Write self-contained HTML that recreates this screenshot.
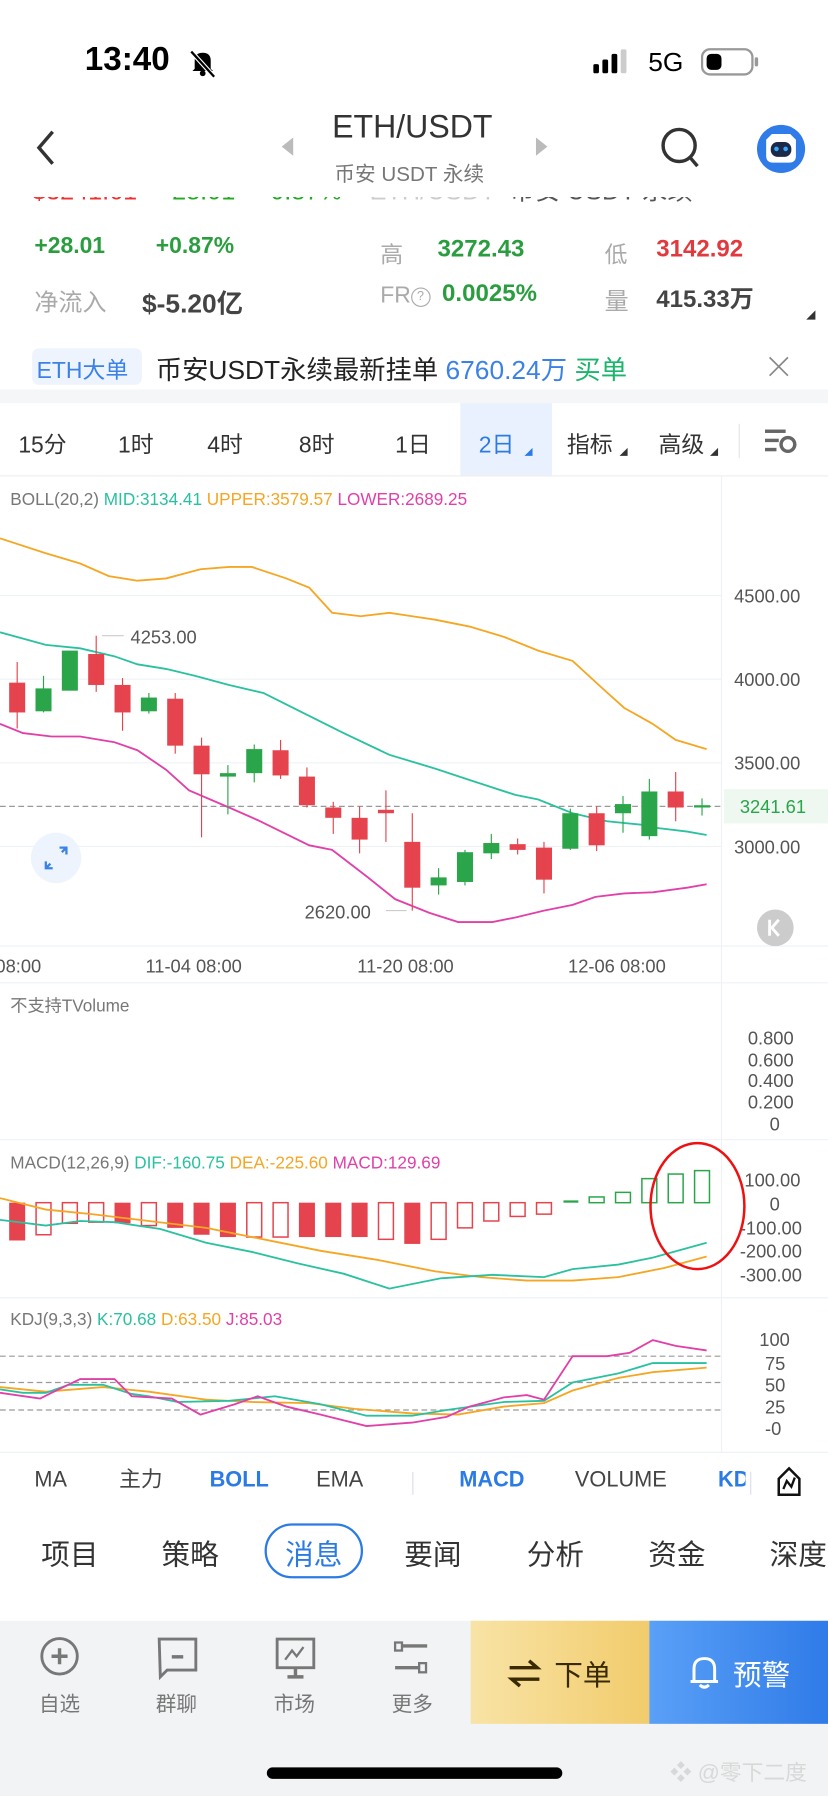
<!DOCTYPE html>
<html><head><meta charset="utf-8"><style>
html,body{margin:0;padding:0;background:#fff;}
body{width:828px;height:1796px;overflow:hidden;position:relative;font-family:"Liberation Sans","Noto Sans CJK SC",sans-serif;}
#w{position:absolute;left:0;top:0;width:723px;height:1568px;transform:scale(1.14523,1.14541);transform-origin:0 0;}
.a{position:absolute;white-space:nowrap;}
</style></head><body><div id="w">
<!-- status bar -->
<div class="a" style="left:74px;top:36px;font-size:29px;font-weight:bold;color:#000;">13:40</div>
<svg class="a" style="left:162px;top:40px" width="30" height="30" viewBox="0 0 30 30"><path d="M8 20 L8 13 Q8 6 15 6 Q22 6 22 13 L22 20 L24 22 L6 22 Z" fill="#000"/><circle cx="15" cy="24" r="2.5" fill="#000"/><line x1="5" y1="5" x2="25" y2="27" stroke="#fff" stroke-width="4"/><line x1="5" y1="5" x2="25" y2="27" stroke="#000" stroke-width="2"/></svg>
<svg class="a" style="left:518px;top:43px" width="36" height="22"><rect x="0" y="13" width="5" height="8" rx="1.5"/><rect x="8" y="9" width="5" height="12" rx="1.5"/><rect x="16" y="4" width="5" height="17" rx="1.5"/><rect x="24" y="0" width="5" height="21" rx="1.5" fill="#ccc"/></svg>
<div class="a" style="left:566px;top:41px;font-size:23px;color:#000;">5G</div>
<svg class="a" style="left:612px;top:41px" width="52" height="26"><rect x="1" y="2" width="44" height="22" rx="7" fill="none" stroke="#999" stroke-width="2"/><rect x="5" y="6" width="13" height="14" rx="4" fill="#000"/><rect x="47" y="9" width="3" height="8" rx="1.5" fill="#999"/></svg>
<!-- nav -->
<svg class="a" style="left:28px;top:112px" width="24" height="34"><path d="M18 3 L6 17 L18 31" fill="none" stroke="#333" stroke-width="3"/></svg>
<svg class="a" style="left:244px;top:118px" width="14" height="20"><path d="M12 2 L2 10 L12 18Z" fill="#bbb"/></svg>
<svg class="a" style="left:466px;top:118px" width="14" height="20"><path d="M2 2 L12 10 L2 18Z" fill="#bbb"/></svg>
<div class="a" style="left:290px;top:95px;font-size:28px;color:#333;">ETH/USDT</div>
<div class="a" style="left:292px;top:138px;font-size:18px;color:#777;">币安 USDT 永续</div>
<svg class="a" style="left:574px;top:108px" width="40" height="44"><circle cx="19" cy="19" r="14" fill="none" stroke="#333" stroke-width="3"/><line x1="29" y1="30" x2="35" y2="37" stroke="#333" stroke-width="3"/></svg>
<svg class="a" style="left:660px;top:108px" width="44" height="44"><circle cx="22" cy="22" r="21" fill="#2f7be8"/><path d="M9 14 L14 9 L30 9 L35 14 L35 28 Q35 34 29 34 L15 34 Q9 34 9 28Z" fill="#fff"/><rect x="13" y="16" width="18" height="13" rx="6" fill="#1b2a4a"/><circle cx="18" cy="22" r="2" fill="#3af"/><circle cx="26" cy="22" r="2" fill="#3af"/></svg>
<!-- price info clipped row -->
<div class="a" style="left:0;top:172px;width:723px;height:10px;overflow:hidden;">
<div class="a" style="left:28px;top:-18px;font-size:22px;line-height:26px;color:#e33;">$3241.61&nbsp;&nbsp;&nbsp;&nbsp;&nbsp;<span style="color:#2a2">28.01</span>&nbsp;&nbsp;&nbsp;&nbsp;&nbsp;<span style="color:#2a2">0.87%</span>&nbsp;&nbsp;&nbsp;&nbsp;<span style="color:#ccc">ETH/USDT</span>&nbsp;&nbsp;<span style="color:#555">币安 USDT 永续</span></div></div>
<div class="a" style="left:30px;top:204px;font-size:20px;font-weight:bold;color:#2a9d3f;">+28.01</div>
<div class="a" style="left:136px;top:204px;font-size:20px;font-weight:bold;color:#2a9d3f;">+0.87%</div>
<div class="a" style="left:332px;top:206px;font-size:20px;color:#aaa;">高</div>
<div class="a" style="left:382px;top:206px;font-size:21px;font-weight:bold;color:#2a9d3f;">3272.43</div>
<div class="a" style="left:528px;top:206px;font-size:20px;color:#aaa;">低</div>
<div class="a" style="left:573px;top:206px;font-size:21px;font-weight:bold;color:#e03a3e;">3142.92</div>
<div class="a" style="left:30px;top:248px;font-size:21px;color:#aaa;">净流入</div>
<div class="a" style="left:124px;top:246px;font-size:23px;font-weight:bold;color:#444;">$-5.20亿</div>
<div class="a" style="left:332px;top:247px;font-size:20px;color:#aaa;">FR<span style="display:inline-block;width:15px;height:15px;border:1.5px solid #aaa;border-radius:50%;font-size:11px;text-align:center;line-height:15px;vertical-align:2px">?</span></div>
<div class="a" style="left:386px;top:245px;font-size:21px;font-weight:bold;color:#2a9d3f;">0.0025%</div>
<div class="a" style="left:528px;top:247px;font-size:21px;color:#aaa;">量</div>
<div class="a" style="left:573px;top:245px;font-size:21px;font-weight:bold;color:#444;">415.33万</div>
<svg class="a" style="left:703px;top:270px" width="10" height="10"><path d="M9 1 L9 9 L1 9Z" fill="#333"/></svg>
<!-- banner -->
<div class="a" style="left:28px;top:304px;width:96px;height:32px;background:#eef4fe;border-radius:6px;"></div>
<div class="a" style="left:32px;top:307px;font-size:20px;color:#3b82e6;">ETH大单</div>
<div class="a" style="left:136px;top:304px;font-size:23px;color:#222;">币安USDT永续最新挂单 <span style="color:#3b82e6">6760.24万</span> <span style="color:#1bb56b">买单</span></div>
<svg class="a" style="left:670px;top:310px" width="20" height="20"><path d="M2 2L18 18M18 2L2 18" stroke="#888" stroke-width="1.5"/></svg>
<div class="a" style="left:0;top:340px;width:723px;height:12px;background:#f5f6f8;"></div>
<!-- timeframe tabs -->
<div class="a" style="left:402px;top:352px;width:80px;height:63px;background:#e8f1fd;"></div>
<div class="a" style="left:16px;top:372px;font-size:20px;color:#333;">15分</div>
<div class="a" style="left:103px;top:372px;font-size:20px;color:#333;">1时</div>
<div class="a" style="left:181px;top:372px;font-size:20px;color:#333;">4时</div>
<div class="a" style="left:261px;top:372px;font-size:20px;color:#333;">8时</div>
<div class="a" style="left:345px;top:372px;font-size:20px;color:#333;">1日</div>
<div class="a" style="left:418px;top:372px;font-size:20px;color:#2b7be5;">2日</div>
<div class="a" style="left:495px;top:372px;font-size:20px;color:#333;">指标</div>
<div class="a" style="left:575px;top:372px;font-size:20px;color:#333;">高级</div>
<svg class="a" style="left:455px;top:390px" width="180" height="10"><path d="M10 1L10 8L3 8Z" fill="#2b7be5"/><path d="M93 1L93 8L86 8Z" fill="#333"/><path d="M172 1L172 8L165 8Z" fill="#333"/></svg>
<div class="a" style="left:645px;top:370px;width:1px;height:30px;background:#e5e5e5;"></div>
<svg class="a" style="left:666px;top:372px" width="32" height="28"><rect x="2" y="3" width="18" height="3" fill="#666"/><rect x="2" y="11" width="12" height="3" fill="#666"/><rect x="2" y="19" width="10" height="3" fill="#666"/><circle cx="22" cy="16" r="6" fill="none" stroke="#666" stroke-width="3"/></svg>
<div class="a" style="left:0;top:415px;width:723px;height:1px;background:#eee;"></div>
<!-- chart -->
<svg class="a" style="left:0;top:415px" width="723" height="855" viewBox="0 415 723 855">
<g stroke="#eef2f7" stroke-width="1"><line x1="0" y1="520" x2="630" y2="520"/><line x1="0" y1="593" x2="630" y2="593"/><line x1="0" y1="666" x2="630" y2="666"/><line x1="0" y1="739" x2="630" y2="739"/><line x1="630" y1="415" x2="630" y2="1268"/><line x1="0" y1="826" x2="723" y2="826"/><line x1="0" y1="858" x2="723" y2="858"/><line x1="0" y1="995" x2="723" y2="995"/><line x1="0" y1="1133" x2="723" y2="1133"/><line x1="0" y1="1268" x2="723" y2="1268"/></g>
<line x1="0" y1="704" x2="630" y2="704" stroke="#999" stroke-dasharray="5,3"/>
<polyline fill="none" stroke="#f5a623" stroke-width="1.6" points="0,470 40,483 70,492 95,503 120,507 145,505 175,497 200,495 220,495 250,505 270,513 290,535 315,538 340,535 360,538 380,541 410,547 440,556 470,568 500,577 525,600 545,618 570,632 590,646 617,654"/>
<polyline fill="none" stroke="#2ac1a0" stroke-width="1.6" points="0,552 40,563 70,566 100,573 120,580 145,584 170,590 200,598 230,605 260,620 300,640 340,659 380,671 410,681 450,694 470,698 500,710 530,717 560,720 575,723 600,726 617,729"/>
<polyline fill="none" stroke="#e040a8" stroke-width="1.6" points="0,632 20,640 45,643 70,643 100,648 120,655 145,672 165,690 200,705 225,716 270,738 290,742 320,765 345,785 375,797 400,805 430,805 450,801 475,795 500,790 520,783 545,780 570,779 600,775 617,772"/>
<rect x="8" y="596" width="14" height="26" fill="#e5434d"/><line x1="15" y1="578" x2="15" y2="636" stroke="#e5434d"/>
<rect x="31" y="601" width="14" height="20" fill="#2aa54a"/><line x1="38" y1="590" x2="38" y2="622" stroke="#2aa54a"/>
<rect x="54" y="568" width="14" height="35" fill="#2aa54a"/>
<rect x="77" y="571" width="14" height="27" fill="#e5434d"/><line x1="84" y1="555" x2="84" y2="604" stroke="#e5434d"/>
<rect x="100" y="598" width="14" height="24" fill="#e5434d"/><line x1="107" y1="592" x2="107" y2="638" stroke="#e5434d"/>
<rect x="123" y="609" width="14" height="12" fill="#2aa54a"/><line x1="130" y1="605" x2="130" y2="623" stroke="#2aa54a"/>
<rect x="146" y="610" width="14" height="41" fill="#e5434d"/><line x1="153" y1="605" x2="153" y2="658" stroke="#e5434d"/>
<rect x="169" y="651" width="14" height="25" fill="#e5434d"/><line x1="176" y1="644" x2="176" y2="731" stroke="#e5434d"/>
<rect x="192" y="675" width="14" height="3" fill="#2aa54a"/><line x1="199" y1="668" x2="199" y2="711" stroke="#2aa54a"/>
<rect x="215" y="654" width="14" height="21" fill="#2aa54a"/><line x1="222" y1="650" x2="222" y2="683" stroke="#2aa54a"/>
<rect x="238" y="655" width="14" height="22" fill="#e5434d"/><line x1="245" y1="646" x2="245" y2="680" stroke="#e5434d"/>
<rect x="261" y="678" width="14" height="25" fill="#e5434d"/><line x1="268" y1="670" x2="268" y2="705" stroke="#e5434d"/>
<rect x="284" y="705" width="14" height="9" fill="#e5434d"/><line x1="291" y1="700" x2="291" y2="728" stroke="#e5434d"/>
<rect x="307" y="714" width="14" height="19" fill="#e5434d"/><line x1="314" y1="704" x2="314" y2="745" stroke="#e5434d"/>
<rect x="330" y="707" width="14" height="3" fill="#e5434d"/><line x1="337" y1="690" x2="337" y2="735" stroke="#e5434d"/>
<rect x="353" y="735" width="14" height="40" fill="#e5434d"/><line x1="360" y1="710" x2="360" y2="795" stroke="#e5434d"/>
<rect x="376" y="766" width="14" height="7" fill="#2aa54a"/><line x1="383" y1="758" x2="383" y2="781" stroke="#2aa54a"/>
<rect x="399" y="744" width="14" height="26" fill="#2aa54a"/><line x1="406" y1="742" x2="406" y2="773" stroke="#2aa54a"/>
<rect x="422" y="736" width="14" height="9" fill="#2aa54a"/><line x1="429" y1="728" x2="429" y2="750" stroke="#2aa54a"/>
<rect x="445" y="737" width="14" height="5" fill="#e5434d"/><line x1="452" y1="732" x2="452" y2="746" stroke="#e5434d"/>
<rect x="468" y="740" width="14" height="28" fill="#e5434d"/><line x1="475" y1="735" x2="475" y2="780" stroke="#e5434d"/>
<rect x="491" y="710" width="14" height="31" fill="#2aa54a"/><line x1="498" y1="706" x2="498" y2="742" stroke="#2aa54a"/>
<rect x="514" y="710" width="14" height="28" fill="#e5434d"/><line x1="521" y1="704" x2="521" y2="743" stroke="#e5434d"/>
<rect x="537" y="702" width="14" height="8" fill="#2aa54a"/><line x1="544" y1="695" x2="544" y2="727" stroke="#2aa54a"/>
<rect x="560" y="691" width="14" height="39" fill="#2aa54a"/><line x1="567" y1="680" x2="567" y2="733" stroke="#2aa54a"/>
<rect x="583" y="691" width="14" height="14" fill="#e5434d"/><line x1="590" y1="674" x2="590" y2="717" stroke="#e5434d"/>
<rect x="606" y="703" width="14" height="2" fill="#2aa54a"/><line x1="613" y1="697" x2="613" y2="712" stroke="#2aa54a"/>
<line x1="89" y1="555" x2="108" y2="555" stroke="#ccc"/><line x1="337" y1="795" x2="355" y2="795" stroke="#ccc"/>
<text x="114" y="562" font-size="16" fill="#555" font-family="Liberation Sans">4253.00</text>
<text x="266" y="802" font-size="16" fill="#555" font-family="Liberation Sans">2620.00</text>
<rect x="632" y="689" width="91" height="30" fill="#eef8f1"/>
<text x="646" y="710" font-size="16" fill="#2aa54a" font-family="Liberation Sans">3241.61</text>
<g font-size="16" fill="#555" font-family="Liberation Sans"><text x="641" y="526">4500.00</text><text x="641" y="599">4000.00</text><text x="641" y="672">3500.00</text><text x="641" y="745">3000.00</text>
<text x="-4" y="849">08:00</text><text x="127" y="849">11-04 08:00</text><text x="312" y="849">11-20 08:00</text><text x="496" y="849">12-06 08:00</text>
<text x="653" y="912">0.800</text><text x="653" y="931">0.600</text><text x="653" y="949">0.400</text><text x="653" y="968">0.200</text><text x="672" y="987">0</text>
<text x="650" y="1036">100.00</text><text x="672" y="1057">0</text><text x="646" y="1078">-100.00</text><text x="646" y="1098">-200.00</text><text x="646" y="1119">-300.00</text>
<text x="663" y="1175">100</text><text x="668" y="1196">75</text><text x="668" y="1215">50</text><text x="668" y="1234">25</text><text x="668" y="1253">-0</text></g>
<circle cx="49" cy="749" r="22" fill="#eef4fe"/><path d="M44 754 L40 758 M40 752 L40 758 L46 758 M54 744 L58 740 M52 740 L58 740 L58 746" stroke="#3b82e6" stroke-width="2" fill="none"/>
<circle cx="677" cy="810" r="16" fill="#ccc"/><path d="M672 803 L672 817 M680 803 L674 810 L680 817" stroke="#fff" stroke-width="2.5" fill="none"/>
<text x="9" y="441" font-size="15" font-family="Liberation Sans" fill="#777">BOLL(20,2) <tspan fill="#2ac1a0">MID:3134.41</tspan> <tspan fill="#f5a623">UPPER:3579.57</tspan> <tspan fill="#e040a8">LOWER:2689.25</tspan></text>
<text x="9" y="883" font-size="15" font-family="Liberation Sans,Noto Sans CJK SC" fill="#777">不支持TVolume</text>
<text x="9" y="1020" font-size="15" font-family="Liberation Sans" fill="#777">MACD(12,26,9) <tspan fill="#2ac1a0">DIF:-160.75</tspan> <tspan fill="#f5a623">DEA:-225.60</tspan> <tspan fill="#e040a8">MACD:129.69</tspan></text>
<text x="9" y="1157" font-size="15" font-family="Liberation Sans" fill="#777">KDJ(9,3,3) <tspan fill="#2ac1a0">K:70.68</tspan> <tspan fill="#f5a623">D:63.50</tspan> <tspan fill="#e040a8">J:85.03</tspan></text>
<g fill="#e5434d"><rect x="8" y="1050" width="14" height="33"/><rect x="100" y="1050" width="14" height="18"/><rect x="146" y="1050" width="14" height="22"/><rect x="169" y="1050" width="14" height="28"/><rect x="192" y="1050" width="14" height="30"/><rect x="261" y="1050" width="14" height="30"/><rect x="284" y="1050" width="14" height="30"/><rect x="307" y="1050" width="14" height="30"/><rect x="353" y="1050" width="14" height="36"/></g>
<g fill="none" stroke="#e5434d" stroke-width="1.3"><rect x="31.5" y="1050" width="13" height="28"/><rect x="54.5" y="1050" width="13" height="18"/><rect x="77.5" y="1050" width="13" height="17"/><rect x="123.5" y="1050" width="13" height="20"/><rect x="215.5" y="1050" width="13" height="30"/><rect x="238.5" y="1050" width="13" height="30"/><rect x="330.5" y="1050" width="13" height="32"/><rect x="376.5" y="1050" width="13" height="32"/><rect x="399.5" y="1050" width="13" height="22"/><rect x="422.5" y="1050" width="13" height="16"/><rect x="445.5" y="1050" width="13" height="12"/><rect x="468.5" y="1050" width="13" height="10"/></g>
<g fill="none" stroke="#2aa54a" stroke-width="1.3"><line x1="492" y1="1049" x2="505" y2="1049" stroke-width="2"/><rect x="514.5" y="1045" width="13" height="5"/><rect x="537.5" y="1041" width="13" height="9"/><rect x="560.5" y="1029" width="13" height="21"/><rect x="583.5" y="1025" width="13" height="25"/><rect x="606.5" y="1022" width="13" height="28"/></g>
<polyline fill="none" stroke="#f5a623" stroke-width="1.6" points="0,1046 40,1056 80,1060 130,1066 180,1072 230,1082 280,1092 330,1100 380,1110 420,1115 460,1118 500,1118 540,1115 580,1107 617,1097"/>
<polyline fill="none" stroke="#2ac1a0" stroke-width="1.6" points="0,1065 40,1070 70,1066 100,1067 140,1073 180,1085 220,1093 260,1103 300,1112 340,1125 385,1116 430,1113 475,1115 500,1108 540,1104 570,1098 617,1085"/>
<ellipse cx="609" cy="1053" rx="41" ry="55" fill="none" stroke="#e11" stroke-width="2.2"/>
<g stroke="#999" stroke-dasharray="5,3"><line x1="0" y1="1184" x2="630" y2="1184"/><line x1="0" y1="1207" x2="630" y2="1207"/><line x1="0" y1="1231" x2="630" y2="1231"/></g>
<polyline fill="none" stroke="#f5a623" stroke-width="1.6" points="0,1211 40,1215 90,1211 130,1215 180,1222 220,1224 270,1225 310,1230 360,1234 400,1235 440,1228 475,1225 500,1214 540,1203 570,1198 617,1194"/>
<polyline fill="none" stroke="#2ac1a0" stroke-width="1.6" points="0,1213 20,1216 40,1216 60,1209 90,1209 115,1217 130,1219 155,1224 200,1223 240,1219 280,1226 320,1236 360,1236 390,1231 440,1224 475,1223 500,1207 540,1199 570,1190 617,1190"/>
<polyline fill="none" stroke="#e040a8" stroke-width="1.6" points="0,1216 35,1221 45,1216 70,1204 100,1204 115,1219 150,1221 175,1235 205,1226 225,1219 250,1228 280,1235 320,1245 360,1242 390,1237 410,1228 440,1220 460,1218 475,1222 500,1184 530,1184 550,1181 570,1170 590,1175 617,1179"/>
</svg>
<!-- indicator tabs -->
<div class="a" style="left:30px;top:1282px;font-size:19px;color:#444;">MA</div>
<div class="a" style="left:104px;top:1281px;font-size:19px;color:#444;line-height:24px;">主力</div>
<div class="a" style="left:183px;top:1282px;font-size:19px;font-weight:bold;color:#2b7be5;">BOLL</div>
<div class="a" style="left:276px;top:1282px;font-size:19px;color:#444;">EMA</div>
<div class="a" style="left:360px;top:1285px;width:1px;height:20px;background:#dde;"></div>
<div class="a" style="left:401px;top:1282px;font-size:19px;font-weight:bold;color:#2b7be5;">MACD</div>
<div class="a" style="left:502px;top:1282px;font-size:19px;color:#444;">VOLUME</div>
<div class="a" style="left:627px;top:1282px;width:24px;overflow:hidden;font-size:19px;font-weight:bold;color:#2b7be5;">KDJ</div>
<div class="a" style="left:655px;top:1285px;width:1px;height:20px;background:#dde;"></div>
<svg class="a" style="left:676px;top:1279px" width="26" height="30"><path d="M4 26 L4 12 L13 3 L22 12 L22 26Z" fill="none" stroke="#111" stroke-width="2.2"/><path d="M8 21 L11 14 L15 19 L18 11" fill="none" stroke="#111" stroke-width="2"/></svg>
<!-- news tabs -->
<div class="a" style="left:231px;top:1330px;width:86px;height:48px;border:2px solid #2b7be5;border-radius:25px;box-sizing:border-box;"></div>
<div class="a" style="left:36px;top:1338px;font-size:25px;color:#333;">项目</div>
<div class="a" style="left:141px;top:1338px;font-size:25px;color:#333;">策略</div>
<div class="a" style="left:249px;top:1338px;font-size:25px;color:#2b7be5;">消息</div>
<div class="a" style="left:353px;top:1338px;font-size:25px;color:#333;">要闻</div>
<div class="a" style="left:460px;top:1338px;font-size:25px;color:#333;">分析</div>
<div class="a" style="left:566px;top:1338px;font-size:25px;color:#333;">资金</div>
<div class="a" style="left:672px;top:1338px;font-size:25px;color:#333;">深度</div>
<!-- bottom bar -->
<div class="a" style="left:0;top:1415px;width:723px;height:153px;background:#f2f3f5;"></div>
<svg class="a" style="left:34px;top:1428px" width="36" height="36"><circle cx="18" cy="18" r="15.5" fill="none" stroke="#777" stroke-width="2.5"/><path d="M18 11 V25 M11 18 H25" stroke="#777" stroke-width="3"/></svg>
<svg class="a" style="left:136px;top:1428px" width="38" height="40"><path d="M3 3 H35 V30 H10 L4 36 Z" fill="none" stroke="#777" stroke-width="2.5"/><rect x="14" y="17" width="10" height="3" fill="#777"/></svg>
<svg class="a" style="left:239px;top:1428px" width="38" height="40"><rect x="3" y="3" width="32" height="25" fill="none" stroke="#777" stroke-width="2.5"/><path d="M10 21 L16 13 L20 18 L26 10" fill="none" stroke="#777" stroke-width="2"/><path d="M19 29 V35 M12 36 H26" stroke="#777" stroke-width="3"/></svg>
<svg class="a" style="left:342px;top:1432px" width="34" height="34"><rect x="3" y="2" width="6" height="7" fill="none" stroke="#777" stroke-width="2"/><path d="M9 5 H31" stroke="#777" stroke-width="3"/><rect x="24" y="20" width="6" height="8" fill="none" stroke="#777" stroke-width="2"/><path d="M3 24 H24" stroke="#777" stroke-width="3"/></svg>
<div class="a" style="left:34px;top:1474px;font-size:18px;color:#777;">自选</div>
<div class="a" style="left:136px;top:1474px;font-size:18px;color:#777;">群聊</div>
<div class="a" style="left:239px;top:1474px;font-size:18px;color:#777;">市场</div>
<div class="a" style="left:342px;top:1474px;font-size:18px;color:#777;">更多</div>
<div class="a" style="left:411px;top:1415px;width:156px;height:90px;background:linear-gradient(90deg,#f8e3a6,#f2cc6c);"></div>
<div class="a" style="left:567px;top:1415px;width:156px;height:90px;background:linear-gradient(90deg,#5aa0f7,#2f7be8);"></div>
<svg class="a" style="left:443px;top:1448px" width="30" height="26"><path d="M2 8 H26 L19 2 M28 18 H4 L11 24" fill="none" stroke="#3a2a00" stroke-width="3"/></svg>
<div class="a" style="left:484px;top:1443px;font-size:25px;color:#3a2a00;">下单</div>
<svg class="a" style="left:601px;top:1444px" width="28" height="32"><path d="M5 24 V13 Q5 4 14 4 Q23 4 23 13 V24 H26 M2 24 H26" fill="none" stroke="#fff" stroke-width="2.6"/><path d="M10 27 Q14 31 18 27" fill="none" stroke="#fff" stroke-width="2.6"/></svg>
<div class="a" style="left:640px;top:1443px;font-size:25px;color:#fff;">预警</div>
<div class="a" style="left:233px;top:1543px;width:258px;height:10px;background:#000;border-radius:5px;"></div>
<div class="a" style="left:585px;top:1533px;font-size:19px;color:#d8d8d8;">❖ @零下二度</div>
</div></body></html>
